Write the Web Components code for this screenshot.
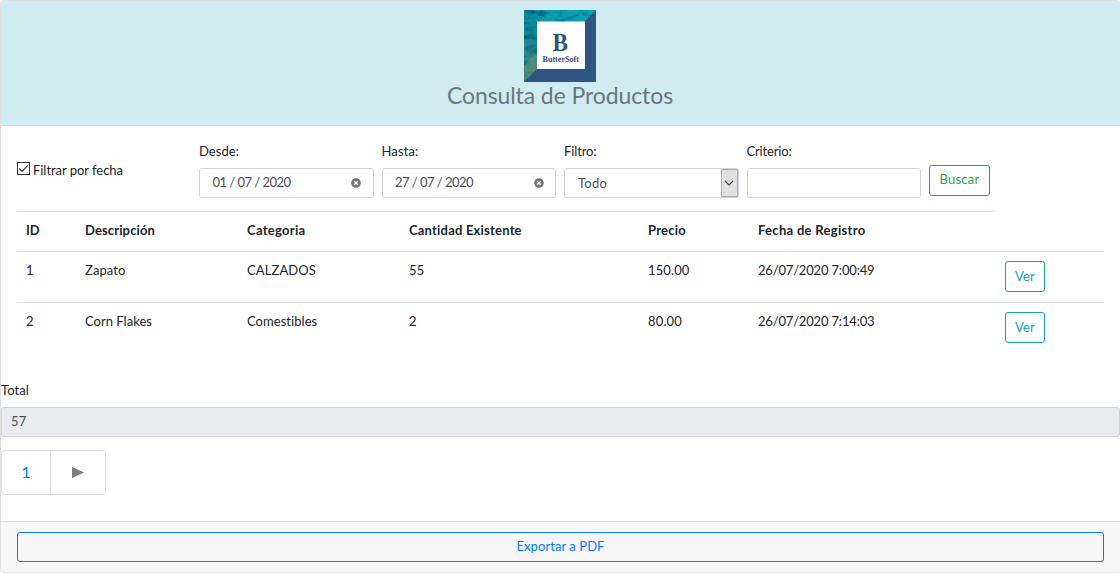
<!DOCTYPE html>
<html lang="es">
<head>
<meta charset="utf-8">
<title>Consulta de Productos</title>
<style>
html,body{margin:0;padding:0;background:#fff;overflow:hidden}
body{font:13px/20px Lato,"Noto Sans",sans-serif;color:#212529;height:573px}
</style>
</head>
<body>
<products-page></products-page>

<template id="tpl-page">
<style>
:host{display:block;box-sizing:border-box;width:1121px;height:573px;border:1px solid #dfdfdf;border-radius:4px;overflow:hidden;background:#fff}
.body{height:395px}
.filters{display:grid;grid-template-columns:182px repeat(3,182.5px) 182.5px auto;box-sizing:border-box;height:85px;padding:16px 0 0 16px}
.check{display:flex;align-items:center;gap:3px;height:20px;padding-top:18px}
.check svg{margin-top:-4px}
.search{padding-top:23px}
.rows{padding:0 16px;display:block}
.total{height:20px;padding-top:27px}
</style>
<brand-header></brand-header>
<div class="body">
  <div class="filters">
    <div class="check">
      <svg width="13" height="13" viewBox="0 0 13 13"><rect x=".5" y=".5" width="12" height="12" fill="#fff" stroke="#333"/><path d="M2.3 6.5 5 9.3 10.9 3.4" fill="none" stroke="#333" stroke-width="1.2"/></svg>
      <fit-text w="90">Filtrar por fecha</fit-text>
    </div>
    <form-field kind="date"><fit-text slot="label" w="40">Desde:</fit-text><fit-text w="78">01 / 07 / 2020</fit-text></form-field>
    <form-field kind="date"><fit-text slot="label" w="37">Hasta:</fit-text><fit-text w="78">27 / 07 / 2020</fit-text></form-field>
    <form-field kind="select"><fit-text slot="label" w="32.5">Filtro:</fit-text><fit-text w="29">Todo</fit-text></form-field>
    <form-field kind="text"><fit-text slot="label" w="45">Criterio:</fit-text></form-field>
    <div class="search"><bs-button style="--c:#28a745;--w:61px;--lift:3px"><fit-text w="40">Buscar</fit-text></bs-button></div>
  </div>
  <div class="rows">
    <table-row head><fit-text w="13.5">ID</fit-text><fit-text w="70">Descripción</fit-text><fit-text w="58.5">Categoria</fit-text><fit-text w="113">Cantidad Existente</fit-text><fit-text w="38">Precio</fit-text><fit-text w="107.5">Fecha de Registro</fit-text></table-row>
    <table-row><fit-text w="7.5">1</fit-text><fit-text w="40.5">Zapato</fit-text><fit-text w="69">CALZADOS</fit-text><fit-text w="15.5">55</fit-text><fit-text w="41.5">150.00</fit-text><fit-text w="116.5">26/07/2020 7:00:49</fit-text><bs-button style="--c:#17a2b8;--w:40px"><fit-text w="20">Ver</fit-text></bs-button></table-row>
    <table-row><fit-text w="7.5">2</fit-text><fit-text w="67">Corn Flakes</fit-text><fit-text w="70.5">Comestibles</fit-text><fit-text w="7.5">2</fit-text><fit-text w="34">80.00</fit-text><fit-text w="116.5">26/07/2020 7:14:03</fit-text><bs-button style="--c:#17a2b8;--w:40px"><fit-text w="20">Ver</fit-text></bs-button></table-row>
  </div>
  <div class="total"><fit-text w="28">Total</fit-text></div>
  <total-field><fit-text w="15.5">57</fit-text></total-field>
  <bs-pager></bs-pager>
</div>
<card-footer><bs-button style="--c:#007bff;--w:1087px;--h:30px;--lift:2px"><fit-text w="88">Exportar a PDF</fit-text></bs-button></card-footer>
</template>

<template id="tpl-header">
<style>
:host{display:flex;flex-direction:column;align-items:center;box-sizing:border-box;width:1119px;height:125px;padding:9px 1px 0 0;background:#d1ecf1;border-bottom:1px solid #bee5eb}
svg{display:block}
h1{margin:0;font-weight:400;font-size:23px;line-height:27px;color:#6c757d}
</style>
<svg width="72" height="72" viewBox="0 0 72 72">
  <defs>
    <linearGradient id="sea" x1="1" y1="0" x2="0" y2="1"><stop offset="0" stop-color="#07a3b4"/><stop offset=".4" stop-color="#0a9bae"/><stop offset=".6" stop-color="#118497"/><stop offset=".8" stop-color="#2f8585"/><stop offset="1" stop-color="#3f8679"/></linearGradient>
    <filter id="grain" x="0" y="0" width="1" height="1" color-interpolation-filters="sRGB"><feTurbulence type="fractalNoise" baseFrequency=".09 .16" numOctaves="3" seed="8"/><feColorMatrix values="0 0 0 0 0  0 0 0 0 .37  0 0 0 0 .5  3 0 0 0 -1.4"/></filter>
  </defs>
  <rect width="72" height="72" fill="url(#sea)"/>
  <rect width="72" height="72" filter="url(#grain)"/>
  <path d="M0 58Q5 46 14 44V60L5 68Z" fill="#84966b" opacity=".45"/>
  <path d="M72 0V72H0Z" fill="#2e5482"/>
  <rect x="13" y="11.5" width="48" height="47.5" fill="#fff"/>
  <text x="28.5" y="40.5" font-family="Liberation Serif,serif" font-weight="700" font-size="26" textLength="15.5" lengthAdjust="spacingAndGlyphs" fill="#2e5482">B</text>
  <text x="18.5" y="52" font-family="Liberation Serif,serif" font-weight="700" font-size="7.5" textLength="36.5" lengthAdjust="spacingAndGlyphs" fill="#2e5482">ButterSoft</text>
</svg>
<h1><fit-text w="226">Consulta de Productos</fit-text></h1>
</template>

<template id="tpl-field">
<style>
:host{display:block}
.label{height:20px;padding-bottom:6px;margin-top:-1px}
.box{display:flex;align-items:center;box-sizing:border-box;width:174.5px;height:30px;margin-top:1px;border:1px solid #ced4da;border-radius:3px;background:#fff;color:#495057;padding-left:13px}
.box svg{display:none;margin-left:auto}
:host([kind=date]) .box{padding:0 11.5px 2px 12.5px}
:host([kind=date]) .clear{display:block;margin-top:1px}
:host([kind=select]) .arrow{display:block}
</style>
<div class="label"><slot name="label"></slot></div>
<div class="box"><slot></slot>
<svg class="clear" width="10" height="10" viewBox="0 0 10 10"><circle cx="5" cy="5" r="4.8" fill="#737373"/><path d="M3.2 3.2 6.8 6.8M6.8 3.2 3.2 6.8" stroke="#fff" stroke-width="1.3"/></svg>
<svg class="arrow" width="17" height="28" viewBox="0 0 17 28"><rect x=".5" y=".5" width="16" height="27" fill="#e1e1e1" stroke="#adadad"/><path d="M4 12 8 16 12 12" fill="none" stroke="#444" stroke-width="1.1"/></svg>
</div>
</template>

<template id="tpl-button">
<style>
:host{display:block;width:var(--w)}
button{display:flex;align-items:center;justify-content:center;box-sizing:border-box;width:100%;height:var(--h,31px);padding:0 0 var(--lift,1px);font:inherit;color:var(--c);background:transparent;border:1px solid var(--c);border-radius:3px}
</style>
<button><slot></slot></button>
</template>

<template id="tpl-row">
<style>
:host{display:grid;grid-template-columns:59px 162px 162px 239px 110px 247px 1fr;box-sizing:border-box;height:51px;padding:8px 0 0 9px;border-top:1px solid #dee2e6}
:host([head]){height:40px;width:978px;font-weight:700}
::slotted(bs-button){margin-top:1px}
</style>
<slot></slot>
</template>

<template id="tpl-total">
<style>
:host{display:flex;align-items:center;box-sizing:border-box;width:1119px;height:30px;margin-top:7px;padding:0 9px 2px;background:#e9ecef;border:1px solid #ced4da;border-radius:3px;color:#495057}
</style>
<slot></slot>
</template>

<template id="tpl-pager">
<style>
:host{display:flex;box-sizing:border-box;width:105px;height:45px;margin-top:13px;border:1px solid #dee2e6;border-radius:4px;font-size:16px}
span{display:flex;align-items:center;justify-content:center}
.page{width:48px;padding-bottom:1px;border-right:1px solid #dee2e6;color:#007bff}
.next{flex:1}
</style>
<span class="page">1</span>
<span class="next"><svg width="12" height="11" viewBox="0 0 12 11"><path d="M0 0 12 5.5 0 11Z" fill="#7d7d7d"/></svg></span>
</template>

<template id="tpl-footer">
<style>
:host{display:block;box-sizing:border-box;width:1119px;height:51px;padding:10px 0 0 16px;background:#f7f7f7;border-top:1px solid #dfdfdf}
</style>
<slot></slot>
</template>

<script>
function define(name, id) {
  customElements.define(name, class extends HTMLElement {
    constructor() {
      super();
      this.attachShadow({mode: 'open'}).append(document.getElementById(id).content.cloneNode(true));
    }
  });
}
define('brand-header', 'tpl-header');
define('form-field', 'tpl-field');
define('bs-button', 'tpl-button');
define('table-row', 'tpl-row');
define('total-field', 'tpl-total');
define('bs-pager', 'tpl-pager');
define('card-footer', 'tpl-footer');
define('products-page', 'tpl-page');

// Tracks its text out or in so that the line has the advance width given in "w".
customElements.define('fit-text', class extends HTMLElement {
  constructor() {
    super();
    this.attachShadow({mode: 'open'}).innerHTML =
      '<style>:host{display:block;white-space:nowrap}span{display:inline-block}</style><span><slot></slot></span>';
  }
  connectedCallback() {
    const span = this.shadowRoot.querySelector('span');
    span.style.letterSpacing = '0';
    const natural = span.getBoundingClientRect().width;
    const count = this.textContent.length;
    span.style.letterSpacing = ((this.getAttribute('w') - natural) / count).toFixed(3) + 'px';
  }
});
</script>
</body>
</html>
